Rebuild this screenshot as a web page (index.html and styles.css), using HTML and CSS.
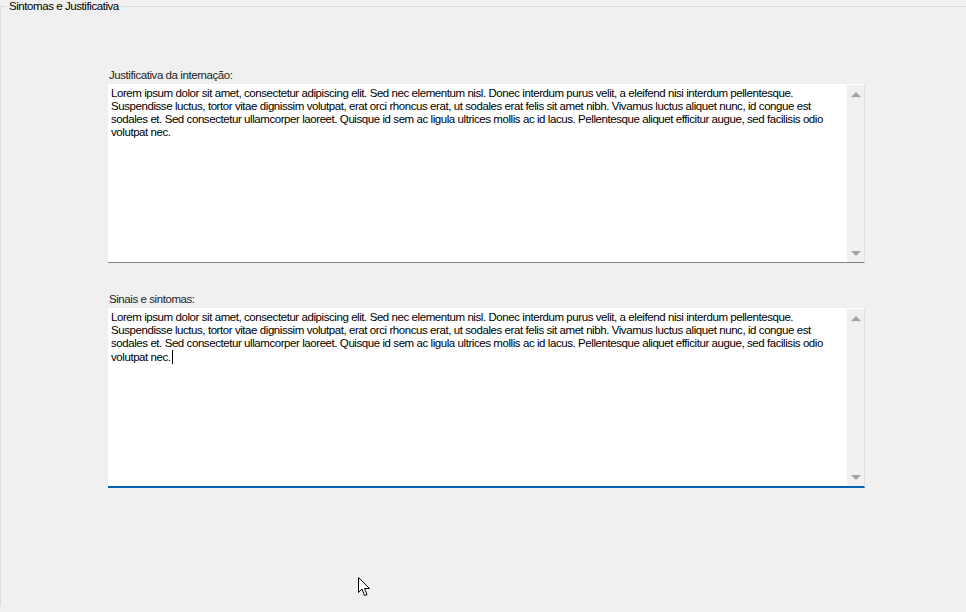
FILE: index.html
```html
<!DOCTYPE html>
<html lang="pt">
<head>
    <meta charset="UTF-8">
    <title>Sintomas e Justificativa</title>
    <link rel="stylesheet" href="styles.css">
</head>
<body>

    <fieldset class="group-box">
        <legend>Sintomas e Justificativa</legend>

        <div class="fields">
            <div class="field">
                <label class="field-label">Justificativa da internação:</label>
                <div class="text-box">
                    <div class="text-content">
                        <span class="line">Lorem ipsum dolor sit amet, consectetur adipiscing elit. Sed nec elementum nisl. Donec interdum purus velit, a eleifend nisi interdum pellentesque.</span>
                        <span class="line">Suspendisse luctus, tortor vitae dignissim volutpat, erat orci rhoncus erat, ut sodales erat felis sit amet nibh. Vivamus luctus aliquet nunc, id congue est</span>
                        <span class="line">sodales et. Sed consectetur ullamcorper laoreet. Quisque id sem ac ligula ultrices mollis ac id lacus. Pellentesque aliquet efficitur augue, sed facilisis odio</span>
                        <span class="line">volutpat nec.</span>
                    </div>
                    <div class="scrollbar">
                        <span class="arrow arrow-up"></span>
                        <span class="arrow arrow-down"></span>
                    </div>
                </div>
            </div>

            <div class="field">
                <label class="field-label">Sinais e sintomas:</label>
                <div class="text-box focused">
                    <div class="text-content">
                        <span class="line">Lorem ipsum dolor sit amet, consectetur adipiscing elit. Sed nec elementum nisl. Donec interdum purus velit, a eleifend nisi interdum pellentesque.</span>
                        <span class="line">Suspendisse luctus, tortor vitae dignissim volutpat, erat orci rhoncus erat, ut sodales erat felis sit amet nibh. Vivamus luctus aliquet nunc, id congue est</span>
                        <span class="line">sodales et. Sed consectetur ullamcorper laoreet. Quisque id sem ac ligula ultrices mollis ac id lacus. Pellentesque aliquet efficitur augue, sed facilisis odio</span>
                        <span class="line">volutpat nec.<span class="caret"></span></span>
                    </div>
                    <div class="scrollbar">
                        <span class="arrow arrow-up"></span>
                        <span class="arrow arrow-down"></span>
                    </div>
                </div>
            </div>
        </div>
    </fieldset>

    <svg class="mouse-pointer" width="13" height="20" viewBox="0 0 13 20">
        <path d="M0.5 0.5 L0.5 15.5 L4 12 L6.5 18.5 L9 17.5 L6.5 11.5 L11.5 11.5 Z" fill="#fff" stroke="#000" stroke-width="1"/>
    </svg>

</body>
</html>
```

FILE: styles.css
```css
body {
    font-family: 'Liberation Sans', Arial, sans-serif;
    font-size: 11.5px;
    letter-spacing: -0.43px;
    background-color: #f0f0f0;
    color: #000;
    margin: 0;
    padding: 0;
    height: 612px;
    overflow: hidden;
}

.group-box {
    margin: 0;
    padding: 0 0 0 6px;
    height: 606px;
    border: 1px solid #dcdcdc;
    border-right: none;
    border-bottom: none;
    box-sizing: border-box;
}

.group-box legend {
    padding: 0 2px;
    line-height: 12px;
}

.fields {
    margin: 57px 0 0 101px;
    width: 757px;
    display: flex;
    flex-direction: column;
    gap: 30px;
}

.field {
    display: flex;
    flex-direction: column;
}

.field-label {
    line-height: 12px;
    margin-bottom: 3px;
    padding-left: 1px;
    color: #1e1e1e;
}

.text-box {
    height: 179px;
    background-color: #fff;
    border-right: 1px solid #e3e3e3;
    border-bottom: 1px solid #838383;
    box-sizing: border-box;
    display: flex;
}

.text-box.focused {
    height: 180px;
    border-bottom: 2px solid #0063b1;
}

.text-content {
    flex: 1;
    padding: 3px 0 0 3px;
    line-height: 13px;
    white-space: nowrap;
    overflow: hidden;
}

.line {
    display: block;
}

.caret {
    display: inline-block;
    width: 1px;
    height: 14px;
    margin-left: 1px;
    background-color: #000;
    vertical-align: -3px;
}

.scrollbar {
    width: 17px;
    margin-top: 1px;
    background-color: #f0f0f0;
    display: flex;
    flex-direction: column;
    justify-content: space-between;
    align-items: center;
    padding: 7px 0 6px;
    box-sizing: border-box;
}

.arrow {
    width: 0;
    height: 0;
    border-left: 5px solid transparent;
    border-right: 5px solid transparent;
}

.arrow-up {
    border-bottom: 5px solid #a3a3a3;
}

.arrow-down {
    border-top: 5px solid #a3a3a3;
}

.mouse-pointer {
    position: absolute;
    left: 358px;
    top: 577px;
}
```
